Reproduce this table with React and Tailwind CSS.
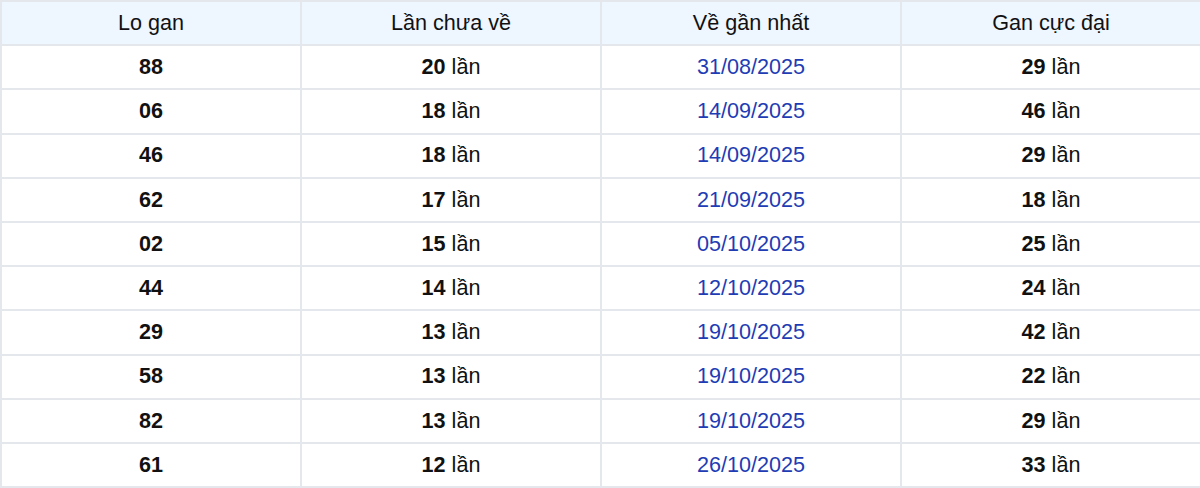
import React from "react";

const rows = [
  ["88", 20, "31/08/2025", 29],
  ["06", 18, "14/09/2025", 46],
  ["46", 18, "14/09/2025", 29],
  ["62", 17, "21/09/2025", 18],
  ["02", 15, "05/10/2025", 25],
  ["44", 14, "12/10/2025", 24],
  ["29", 13, "19/10/2025", 42],
  ["58", 13, "19/10/2025", 22],
  ["82", 13, "19/10/2025", 29],
  ["61", 12, "26/10/2025", 33],
];

function App() {
  return (
    <div className="w-[1200px] bg-white font-['Liberation_Sans',Arial,sans-serif] text-[21.6px] text-[#111]">
      <table className="w-[1202px] table-fixed border-collapse text-center">
        <thead>
          <tr className="h-[44.2px] bg-[#eef6ff]">
            <th className="border-2 border-[#e4e7ec] font-normal">Lo gan</th>
            <th className="border-2 border-[#e4e7ec] font-normal">Lần chưa về</th>
            <th className="border-2 border-[#e4e7ec] font-normal">Về gần nhất</th>
            <th className="border-2 border-[#e4e7ec] font-normal">Gan cực đại</th>
          </tr>
        </thead>
        <tbody>
          {rows.map(([lo, chua, ngay, max]) => (
            <tr key={lo} className="h-[44.2px]">
              <td className="border-2 border-[#e4e7ec] font-bold">{lo}</td>
              <td className="border-2 border-[#e4e7ec]">
                <span className="font-bold">{chua}</span> lần
              </td>
              <td className="border-2 border-[#e4e7ec] text-[#1e3cb4]">{ngay}</td>
              <td className="border-2 border-[#e4e7ec]">
                <span className="font-bold">{max}</span> lần
              </td>
            </tr>
          ))}
        </tbody>
      </table>
    </div>
  );
}

export default App;
